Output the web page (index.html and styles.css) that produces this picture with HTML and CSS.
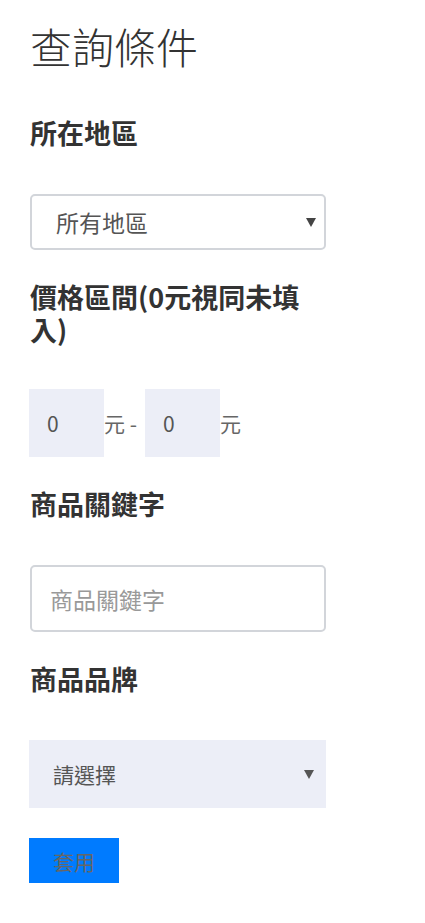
FILE: index.html
```html
<!DOCTYPE html>
<html lang="zh-Hant">
<head>
  <meta charset="utf-8">
  <title>查詢條件</title>
  <link rel="stylesheet" href="styles.css">
</head>
<body>
  <div class="filter">
    <h1 class="filter-title">查詢條件</h1>

    <div class="group">
      <h4 class="group-label">所在地區</h4>
      <div class="select-wrap select-outline">
        <select class="select">
          <option>所有地區</option>
        </select>
      </div>
    </div>

    <div class="group">
      <h4 class="group-label group-label-wrap">價格區間(0元視同未填入)</h4>
      <div class="price-row">
        <input class="price-input" type="text" value="0"><span class="unit unit-sep">元 -</span><input class="price-input" type="text" value="0"><span class="unit">元</span>
      </div>
    </div>

    <div class="group">
      <h4 class="group-label">商品關鍵字</h4>
      <input class="text-input" type="text" placeholder="商品關鍵字">
    </div>

    <div class="group">
      <h4 class="group-label">商品品牌</h4>
      <div class="select-wrap select-fill">
        <select class="select">
          <option>請選擇</option>
        </select>
      </div>
    </div>

    <button class="apply-btn" type="button">套用</button>
  </div>
</body>
</html>
```

FILE: styles.css
```css
body {
  margin: 0;
  font-family: "Noto Sans CJK TC", "Noto Sans", sans-serif;
  color: #333;
  background: #fff;
}

.filter {
  width: 297px;
  padding: 21px 0 0 29px;
}

.filter-title {
  margin: 0 0 45px 1px;
  font-size: 42px;
  line-height: 50px;
  font-weight: 300;
  color: #333;
}

.group {
  margin-bottom: 30px;
}

.group-label {
  margin: 0 0 45px 1px;
  font-size: 27px;
  line-height: 33px;
  font-weight: 700;
  color: #333;
}

.group-label-wrap {
  max-width: 280px;
  margin-bottom: 43px;
}

.select-wrap {
  position: relative;
}

.select-wrap::after {
  content: "";
  position: absolute;
  top: 50%;
  margin-top: -4px;
  border-left: 5px solid transparent;
  border-right: 5px solid transparent;
  border-top: 9px solid #444;
}

.select {
  display: block;
  width: 100%;
  margin: 0;
  font-family: inherit;
  color: #555;
  -webkit-appearance: none;
  appearance: none;
  outline: none;
}

.select-outline {
  margin-left: 1px;
  width: 296px;
}

.select-outline .select {
  height: 56px;
  padding: 0 0 0 24px;
  font-size: 23px;
  border: 2px solid #d2d5da;
  border-radius: 5px;
  background: #fff;
}

.select-outline::after {
  right: 10px;
}

.select-fill .select {
  height: 68px;
  padding: 0 0 0 24px;
  font-size: 21px;
  border: 0;
  border-radius: 0;
  background: #eceef7;
}

.select-fill::after {
  right: 12px;
  border-top-color: #555;
}

.price-row {
  display: flex;
  align-items: center;
  font-size: 21px;
  color: #666;
}

.price-input {
  width: 75px;
  height: 68px;
  box-sizing: border-box;
  margin: 0;
  padding: 0 0 0 18px;
  border: 0;
  background: #eceef7;
  font-family: inherit;
  font-size: 21px;
  color: #555;
  outline: none;
}

.unit {
  white-space: pre;
}

.unit-sep {
  margin-right: 8px;
}

.text-input {
  display: block;
  width: 296px;
  height: 67px;
  box-sizing: border-box;
  margin: 0 0 0 1px;
  padding: 0 0 0 18px;
  border: 2px solid #d2d5da;
  border-radius: 5px;
  font-family: inherit;
  font-size: 23px;
  color: #555;
  outline: none;
}

.text-input::placeholder {
  color: #999;
}

.apply-btn {
  display: block;
  width: 90px;
  height: 45px;
  margin: 0;
  padding: 0;
  border: 0;
  background: #007bff;
  font-family: inherit;
  font-size: 21px;
  color: #666;
  cursor: pointer;
}
```
